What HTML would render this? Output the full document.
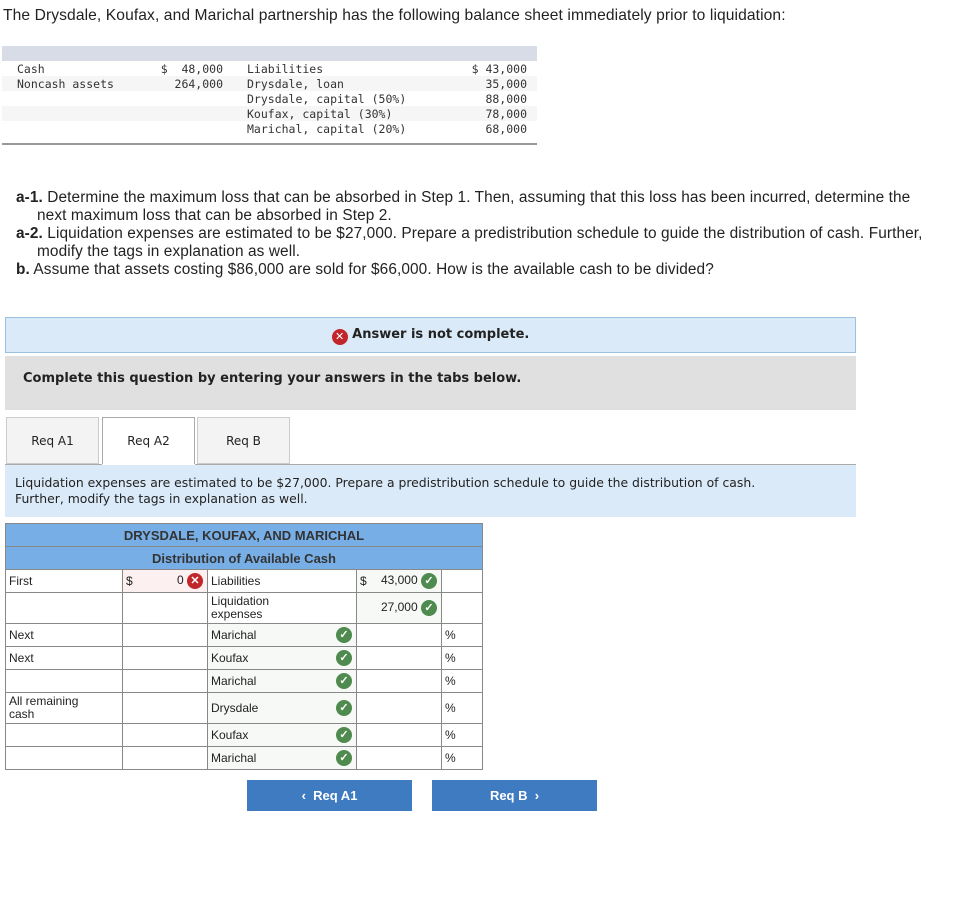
<!DOCTYPE html>
<html><head><style>
body{margin:0;width:955px;height:908px;background:#fff;position:relative;font-family:"Liberation Sans",sans-serif;color:#222;overflow:hidden}
.a{position:absolute}
.mono{font-family:"DejaVu Sans Mono","Liberation Mono",monospace;font-size:11.5px;color:#333}
.ver{font-family:"DejaVu Sans",sans-serif}
.c{position:absolute;border:1px solid #888;box-sizing:border-box;font-size:12px;line-height:13px;padding:2px 3px}
.ok{display:inline-block;width:16px;height:16px;border-radius:50%;background:#4f8a4f;color:#fff;font-size:11px;line-height:16px;text-align:center;font-weight:bold}
.x{display:inline-block;width:16px;height:16px;border-radius:50%;background:#c0262a;color:#fff;font-size:11px;line-height:16px;text-align:center;font-weight:bold}
.btn{position:absolute;background:#3f7bc0;color:#fff;font-weight:bold;font-size:13px;text-align:center;line-height:31px;height:31px}
</style></head><body>
<div class="a" style="left:3px;top:7px;font-size:15.6px;letter-spacing:0.1px">The Drysdale, Koufax, and Marichal partnership has the following balance sheet immediately prior to liquidation:</div>
<div class="a" style="left:2px;top:46px;width:535px;height:15px;background:#d8dce6"></div>
<div class="a" style="left:2px;top:76px;width:535px;height:15px;background:#f6f6f6"></div>
<div class="a" style="left:2px;top:106px;width:535px;height:15px;background:#f6f6f6"></div>
<div class="a" style="left:2px;top:143px;width:535px;height:2px;background:#999"></div>
<div class="a mono" style="left:17px;top:62px;line-height:15px">Cash<br>Noncash assets</div>
<div class="a mono" style="left:140px;top:62px;line-height:15px;width:83px;text-align:right;white-space:pre">$  48,000<br>264,000</div>
<div class="a mono" style="left:247px;top:62px;line-height:15px">Liabilities<br>Drysdale, loan<br>Drysdale, capital (50%)<br>Koufax, capital (30%)<br>Marichal, capital (20%)</div>
<div class="a mono" style="left:440px;top:62px;line-height:15px;width:87px;text-align:right">$ 43,000<br>35,000<br>88,000<br>78,000<br>68,000</div>
<div class="a" style="left:16px;top:189px;width:925px;font-size:15.4px;line-height:18px;letter-spacing:0.1px">
<div style="padding-left:21px;text-indent:-21px"><b>a-1.</b> Determine the maximum loss that can be absorbed in Step 1. Then, assuming that this loss has been incurred, determine the next maximum loss that can be absorbed in Step 2.</div>
<div style="padding-left:21px;text-indent:-21px"><b>a-2.</b> Liquidation expenses are estimated to be $27,000. Prepare a predistribution schedule to guide the distribution of cash. Further, modify the tags in explanation as well.</div>
<div><b>b.</b> Assume that assets costing $86,000 are sold for $66,000. How is the available cash to be divided?</div></div>
<div class="a ver" style="left:5px;top:317px;width:851px;height:36px;background:#dbeaf8;border:1px solid #9cc0e0;box-sizing:border-box;text-align:center;line-height:34px;font-size:13px;font-weight:bold"><span class="x" style="vertical-align:-2px">✕</span> Answer is not complete.</div>
<div class="a ver" style="left:5px;top:356px;width:851px;height:54px;background:#e0e0e0;font-size:13px;font-weight:bold;line-height:45px;padding-left:18px;box-sizing:border-box">Complete this question by entering your answers in the tabs below.</div>
<div class="a ver" style="left:6px;top:417px;width:93px;height:47px;background:#f3f3f3;border:1px solid #ccc;box-sizing:border-box;text-align:center;line-height:46px;font-size:12px">Req A1</div>
<div class="a ver" style="left:102px;top:417px;width:93px;height:48px;background:#fff;border:1px solid #aaa;border-bottom:none;box-sizing:border-box;text-align:center;line-height:46px;font-size:12px">Req A2</div>
<div class="a ver" style="left:197px;top:417px;width:93px;height:47px;background:#f3f3f3;border:1px solid #ccc;box-sizing:border-box;text-align:center;line-height:46px;font-size:12px">Req B</div>
<div class="a" style="left:5px;top:464px;width:851px;height:1px;background:#aaa"></div>
<div class="a" style="left:102px;top:464px;width:93px;height:1px;background:#fff"></div>
<div class="a ver" style="left:5px;top:465px;width:851px;height:52px;background:#dbeaf8;font-size:12.4px;line-height:16px;padding:10px 10px;box-sizing:border-box">Liquidation expenses are estimated to be $27,000. Prepare a predistribution schedule to guide the distribution of cash.<br>Further, modify the tags in explanation as well.</div>
<div class="a" style="left:5px;top:523px;width:478px;height:47px;background:#78aee6;border:1px solid #888;box-sizing:border-box"></div>
<div class="a" style="left:5px;top:546px;width:478px;height:1px;background:#888"></div>
<div class="a" style="left:5px;top:528px;text-align:center;font-size:13px;font-weight:bold;color:#333;width:478px">DRYSDALE, KOUFAX, AND MARICHAL</div>
<div class="a" style="left:5px;top:551px;text-align:center;font-size:13px;font-weight:bold;color:#333;width:478px">Distribution of Available Cash</div>

<div class="c" style="left:5px;top:569px;width:118px;height:24px;padding-top:5px">First</div>
<div class="c" style="left:122px;top:569px;width:86px;height:24px;background:#fdf0f0;padding-top:5px">$<span style="position:absolute;right:4px;top:3px">0 <span class="x">✕</span></span></div>
<div class="c" style="left:207px;top:569px;width:150px;height:24px;padding-top:5px">Liabilities</div>
<div class="c" style="left:356px;top:569px;width:86px;height:24px;background:#f6f9f6;padding-top:5px">$<span style="position:absolute;right:4px;top:3px">43,000 <span class="ok">✓</span></span></div>
<div class="c" style="left:441px;top:569px;width:42px;height:24px"></div>

<div class="c" style="left:5px;top:592px;width:118px;height:32px"></div>
<div class="c" style="left:122px;top:592px;width:86px;height:32px"></div>
<div class="c" style="left:207px;top:592px;width:150px;height:32px">Liquidation<br>expenses</div>
<div class="c" style="left:356px;top:592px;width:86px;height:32px;background:#f6f9f6"><span style="position:absolute;right:4px;top:7px">27,000 <span class="ok">✓</span></span></div>
<div class="c" style="left:441px;top:592px;width:42px;height:32px"></div>

<div class="c" style="left:5px;top:623px;width:118px;height:24px;padding-top:5px">Next</div>
<div class="c" style="left:5px;top:646px;width:118px;height:24px;padding-top:5px">Next</div>
<div class="c" style="left:5px;top:669px;width:118px;height:24px"></div>
<div class="c" style="left:5px;top:692px;width:118px;height:32px">All remaining<br>cash</div>
<div class="c" style="left:5px;top:723px;width:118px;height:24px"></div>
<div class="c" style="left:5px;top:746px;width:118px;height:24px"></div>

<div class="c" style="left:122px;top:623px;width:86px;height:24px"></div>
<div class="c" style="left:122px;top:646px;width:86px;height:24px"></div>
<div class="c" style="left:122px;top:669px;width:86px;height:24px"></div>
<div class="c" style="left:122px;top:692px;width:86px;height:32px"></div>
<div class="c" style="left:122px;top:723px;width:86px;height:24px"></div>
<div class="c" style="left:122px;top:746px;width:86px;height:24px"></div>

<div class="c" style="left:207px;top:623px;width:150px;height:24px;background:#f6f9f6;padding-top:5px">Marichal<span class="ok" style="position:absolute;right:4px;top:3px">✓</span></div>
<div class="c" style="left:207px;top:646px;width:150px;height:24px;background:#f6f9f6;padding-top:5px">Koufax<span class="ok" style="position:absolute;right:4px;top:3px">✓</span></div>
<div class="c" style="left:207px;top:669px;width:150px;height:24px;background:#f6f9f6;padding-top:5px">Marichal<span class="ok" style="position:absolute;right:4px;top:3px">✓</span></div>
<div class="c" style="left:207px;top:692px;width:150px;height:32px;background:#f6f9f6;padding-top:9px">Drysdale<span class="ok" style="position:absolute;right:4px;top:7px">✓</span></div>
<div class="c" style="left:207px;top:723px;width:150px;height:24px;background:#f6f9f6;padding-top:5px">Koufax<span class="ok" style="position:absolute;right:4px;top:3px">✓</span></div>
<div class="c" style="left:207px;top:746px;width:150px;height:24px;background:#f6f9f6;padding-top:5px">Marichal<span class="ok" style="position:absolute;right:4px;top:3px">✓</span></div>

<div class="c" style="left:356px;top:623px;width:86px;height:24px"></div>
<div class="c" style="left:356px;top:646px;width:86px;height:24px"></div>
<div class="c" style="left:356px;top:669px;width:86px;height:24px"></div>
<div class="c" style="left:356px;top:692px;width:86px;height:32px"></div>
<div class="c" style="left:356px;top:723px;width:86px;height:24px"></div>
<div class="c" style="left:356px;top:746px;width:86px;height:24px"></div>

<div class="c" style="left:441px;top:623px;width:42px;height:24px;padding-top:5px">%</div>
<div class="c" style="left:441px;top:646px;width:42px;height:24px;padding-top:5px">%</div>
<div class="c" style="left:441px;top:669px;width:42px;height:24px;padding-top:5px">%</div>
<div class="c" style="left:441px;top:692px;width:42px;height:32px;padding-top:9px">%</div>
<div class="c" style="left:441px;top:723px;width:42px;height:24px;padding-top:5px">%</div>
<div class="c" style="left:441px;top:746px;width:42px;height:24px;padding-top:5px">%</div>

<div class="btn" style="left:247px;top:780px;width:165px">&lsaquo;&nbsp;&nbsp;Req A1</div>
<div class="btn" style="left:432px;top:780px;width:165px">Req B&nbsp;&nbsp;&rsaquo;</div>
</body></html>
